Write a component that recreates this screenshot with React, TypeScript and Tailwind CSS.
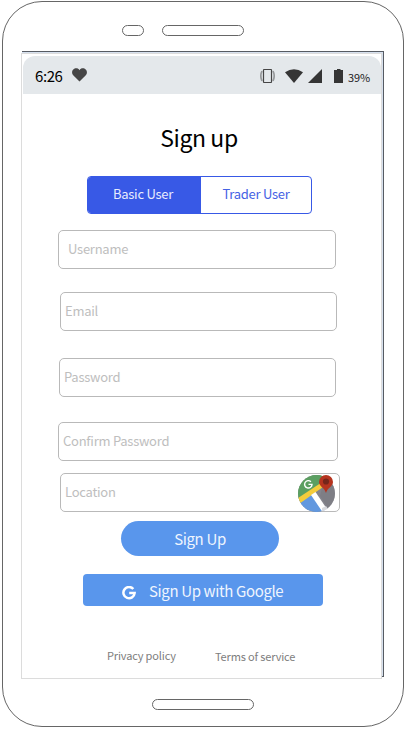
import React from "react";

type FieldProps = { label: string; box: string; children?: React.ReactNode };

function Field({ label, box, children }: FieldProps) {
  return (
    <div className={"flex h-[39px] shrink-0 items-center rounded-[5px] border border-[#b9b9b9] bg-white " + box}>
      <span className="mb-[2px] text-[13px] leading-5 tracking-[-0.25px] whitespace-nowrap text-[#bebebe]">{label}</span>
      {children}
    </div>
  );
}

function MapIcon() {
  return (
    <svg className="mr-[3px] ml-auto shrink-0" width="38" height="38" viewBox="0 0 38 38">
      <defs>
        <clipPath id="disc">
          <circle cx="18.5" cy="19.5" r="18.5" />
        </clipPath>
      </defs>
      <g clipPath="url(#disc)">
        <rect width="38" height="38" fill="#85858d" />
        <path d="M0 0H28V9L0 27Z" fill="#5b9f61" />
        <path d="M0 27L15 17L29 38H0Z" fill="#6298df" />
        <path d="M26 7L38 2V30L32 37L22 22Z" fill="#75757c" opacity=".45" />
        <path d="M0 24L22 9.5L25 13L1 30Z" fill="#f4cc3b" />
        <path d="M13 21L17.5 18L31 38H24.5Z" fill="#fff" />
        <path d="M24 34L28 32L32 38H24Z" fill="#d9dade" />
      </g>
      <path d="M10.5 10.400H14A3.7 3.7 0 1 1 12.9 7.700" fill="none" stroke="#fff" strokeWidth="1.4" />
      <path d="M28 19C26.5 13.5 21 12.5 21 8a7 7 0 0 1 14 0c0 4.500-5.500 5.500-7 11Z" fill="#b5341f" />
      <circle cx="28" cy="7.500" r="3.1" fill="#74261b" />
    </svg>
  );
}

function GoogleMark() {
  return (
    <svg className="mt-[5px] shrink-0" width="14" height="14" viewBox="0 0 14 14" fill="none" stroke="#fff" strokeWidth="2.500">
      <path d="M11.3 3A5.600 5.600 0 1 0 12.600 7.100H7.200" />
    </svg>
  );
}

function StatusBar() {
  return (
    <div className="mt-[2px] ml-px flex h-[38px] w-[358px] shrink-0 items-center rounded-t-[12px] bg-[#e4e8eb] pl-[12px]">
      <span className="mt-[2px] w-[37px] text-[15px] leading-5 tracking-[-0.4px] text-black">6:26</span>
      <svg width="15" height="14" viewBox="0 0 15 14" fill="#464646">
        <path d="M7.500 13.400L1.200 7.300C-.7 5.300-.1 1.900 2.200.8 4.300-.1 6.400.4 7.500 2.300 8.600.4 10.700-.1 12.800.8c2.300 1.100 2.900 4.500 1 6.500Z" />
      </svg>
      <svg className="mt-[2px] ml-[173px]" width="15" height="16" viewBox="0 0 15 16" fill="none" stroke="#454545">
        <path d="M2 3Q-.4 8 2 13M13 3Q15.400 8 13 13" stroke="#96999b" strokeWidth="1.700" />
        <rect x="3.500" y="1.500" width="8" height="13" rx=".5" strokeWidth="1.200" />
      </svg>
      <svg className="mt-px ml-[10px]" width="18" height="14" viewBox="0 0 18 14" fill="#353535">
        <path d="M9 14L0 3.300Q9-3 18 3.300Z" />
      </svg>
      <svg className="mt-px ml-[5px]" width="14" height="14" viewBox="0 0 14 14" fill="#353535">
        <path d="M14 0V14H0Z" />
      </svg>
      <svg className="mt-px ml-[12px]" width="9" height="14" viewBox="0 0 9 14" fill="#353535">
        <path d="M3 0H6.500V1H9V14H0V1H3Z" />
      </svg>
      <span className="mt-[4px] ml-[5px] text-[11px] leading-4 tracking-[-0.1px] text-[#222]">39%</span>
    </div>
  );
}

export default function App() {
  return (
    <div className="h-[729px] w-[406px] overflow-hidden bg-white pt-px pl-[2px] font-['Noto_Sans_CJK_SC',sans-serif]">
      <div className="flex h-[726px] w-[402px] flex-col rounded-[40px] border border-[#666] bg-white">
        <div className="mt-[23px] ml-[119px] flex shrink-0 gap-[18px]">
          <div className="h-[11px] w-[22px] rounded-full border border-[#666]" />
          <div className="h-[11px] w-[82px] rounded-full border border-[#666]" />
        </div>

        <div className="mt-[15px] ml-[19px] h-[626px] w-[362px] shrink-0 border-t border-r border-b border-[#565b62] bg-[#d6e0ee]">
          <div className="mt-px -ml-px flex h-[626px] w-[361px] flex-col border border-[#dcdcdc] bg-white">
            <StatusBar />

            <h1 className="mt-[25px] mr-[5px] text-center text-[23px] leading-9 font-normal tracking-[-0.4px] text-black">Sign up</h1>

            <div className="mt-[21px] ml-[65px] flex h-[38px] w-[225px] shrink-0 overflow-hidden rounded-[4px] border border-[#3859e6] text-[13px] leading-[34px] tracking-[-0.25px]">
              <div className="w-[113px] bg-[#3859e6] pr-[3px] text-center text-[#e8ecfd]">Basic User</div>
              <div className="flex-1 text-center text-[#4562e4]">Trader User</div>
            </div>

            <Field label="Username" box="mt-[16px] ml-[36px] w-[278px] pl-[9px]" />
            <Field label="Email" box="mt-[23px] ml-[38px] w-[277px] pl-[4px]" />
            <Field label="Password" box="mt-[27px] ml-[37px] w-[277px] pl-[4px]" />
            <Field label="Confirm Password" box="mt-[25px] ml-[36px] w-[280px] pl-[4px]" />
            <Field label="Location" box="mt-[12px] ml-[38px] w-[280px] pl-[4px]">
              <MapIcon />
            </Field>

            <button className="mt-[9px] ml-[99px] h-[35px] w-[158px] shrink-0 rounded-full bg-[#5996ec] text-[15px] leading-[35px] tracking-[-0.35px] text-[#eff5fe]">
              Sign Up
            </button>
            <button className="mt-[18px] ml-[61px] flex h-[32px] w-[240px] shrink-0 items-center rounded-[4px] bg-[#5996ec] pl-[39px] text-[15px] tracking-[-0.37px] text-[#eff5fe]">
              <GoogleMark />
              <span className="mt-px ml-[13px] leading-8 whitespace-nowrap">Sign Up with Google</span>
            </button>

            <div className="mt-[41px] flex pl-[85px] text-[11px] leading-4 tracking-[-0.15px] whitespace-nowrap text-[#7d7d7d]">
              <span className="w-[108px]">Privacy policy</span>
              <span className="mt-px">Terms of service</span>
            </div>
          </div>
        </div>

        <div className="mt-[22px] ml-[149px] h-[11px] w-[102px] shrink-0 rounded-full border border-[#666]" />
      </div>
    </div>
  );
}
